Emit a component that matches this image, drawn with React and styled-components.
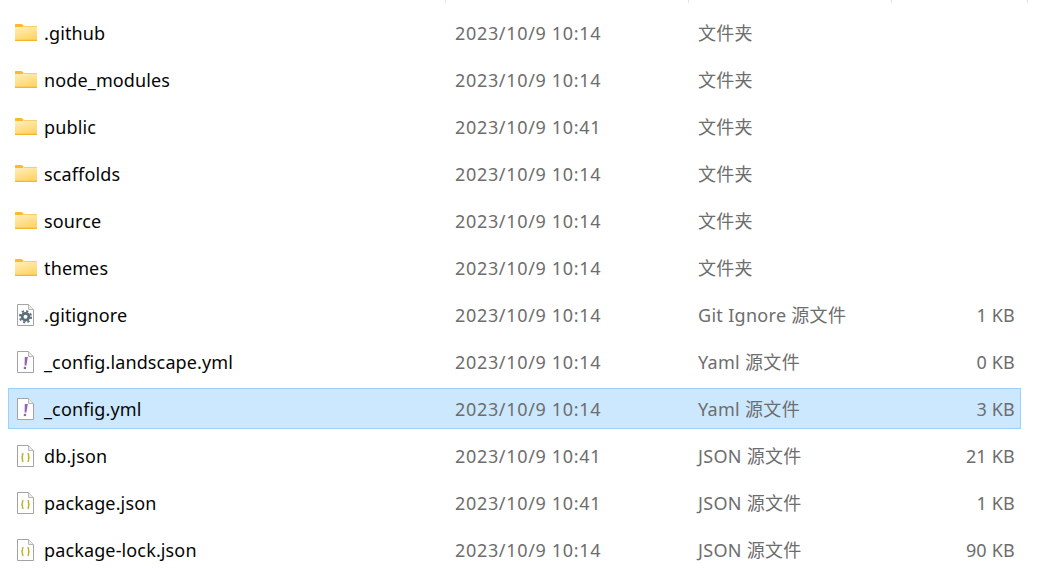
import styled, { createGlobalStyle } from "styled-components";

const FILES = [
  { name: ".github", date: "2023/10/9 10:14", type: "文件夹", icon: "folder" },
  { name: "node_modules", date: "2023/10/9 10:14", type: "文件夹", icon: "folder" },
  { name: "public", date: "2023/10/9 10:41", type: "文件夹", icon: "folder" },
  { name: "scaffolds", date: "2023/10/9 10:14", type: "文件夹", icon: "folder" },
  { name: "source", date: "2023/10/9 10:14", type: "文件夹", icon: "folder" },
  { name: "themes", date: "2023/10/9 10:14", type: "文件夹", icon: "folder" },
  { name: ".gitignore", date: "2023/10/9 10:14", type: "Git Ignore 源文件", size: "1 KB", icon: "gear" },
  { name: "_config.landscape.yml", date: "2023/10/9 10:14", type: "Yaml 源文件", size: "0 KB", icon: "yaml" },
  { name: "_config.yml", date: "2023/10/9 10:14", type: "Yaml 源文件", size: "3 KB", icon: "yaml", selected: true },
  { name: "db.json", date: "2023/10/9 10:41", type: "JSON 源文件", size: "21 KB", icon: "json" },
  { name: "package.json", date: "2023/10/9 10:41", type: "JSON 源文件", size: "1 KB", icon: "json" },
  { name: "package-lock.json", date: "2023/10/9 10:14", type: "JSON 源文件", size: "90 KB", icon: "json" },
];

function FolderIcon() {
  return (
    <svg width="24" height="24" viewBox="0 0 24 24">
      <defs>
        <linearGradient id="folderFill" x1="0" y1="0" x2="0.4" y2="1">
          <stop offset="0" stopColor="#ffefc0" />
          <stop offset="1" stopColor="#ffd569" />
        </linearGradient>
      </defs>
      <path d="M0 3.700C0 3.300 0.300 3 0.700 3H6.500L8.500 4.500V8H0Z" fill="#fdb92c" />
      <path d="M0 6H7.500L9.500 5H22V20H0Z" fill="url(#folderFill)" />
      <path d="M0 18.800H22V19.600C22 19.800 21.800 20 21.600 20H0.400C0.200 20 0 19.800 0 19.600Z" fill="#f7b32b" />
      <path d="M9.500 5H22V5.800H8Z" fill="#fbc552" />
    </svg>
  );
}

function PageIcon({ children }) {
  return (
    <svg width="24" height="24" viewBox="0 0 24 24">
      <path d="M2.500 1.500H13.500L18.500 6.500V22.500H2.500Z" fill="#fff" stroke="#a3a3a3" />
      <path d="M13.500 1.500V6.500H18.500" fill="#ececec" stroke="#b8b8b8" />
      {children}
    </svg>
  );
}

function FileIcon({ kind }) {
  if (kind === "folder") return <FolderIcon />;
  if (kind === "gear") {
    return (
      <PageIcon>
        <circle cx="10.500" cy="13.700" r="3.400" fill="none" stroke="#5a6f7b" strokeWidth="2.800" />
        <circle cx="10.500" cy="13.700" r="5.600" fill="none" stroke="#5a6f7b" strokeWidth="2" strokeDasharray="2.200 2.200" />
      </PageIcon>
    );
  }
  if (kind === "yaml") {
    return (
      <PageIcon>
        <path d="M9.800 7H12.800L11.400 15.500H9.600Z" fill="#9560b5" />
        <rect x="8.800" y="16.800" width="2.300" height="2.300" fill="#9560b5" />
      </PageIcon>
    );
  }
  return (
    <PageIcon>
      <path
        d="M8.500 9.500C7.300 9.500 7.500 10.500 7.500 11.800C7.500 12.800 7.300 13.300 6.500 13.500C7.300 13.700 7.500 14.200 7.500 15.200C7.500 16.500 7.300 17.500 8.500 17.500M12.500 9.500C13.700 9.500 13.500 10.500 13.500 11.800C13.500 12.800 13.700 13.300 14.500 13.500C13.700 13.700 13.500 14.200 13.500 15.200C13.500 16.500 13.700 17.500 12.500 17.500"
        fill="none"
        stroke="#b8b42a"
        strokeWidth="1.500"
      />
    </PageIcon>
  );
}

export default function App() {
  return (
    <>
      <GlobalStyle />
      <Explorer>
        <HeaderStrip>
          <HeaderCell width={446} />
          <HeaderCell width={243} />
          <HeaderCell width={203} />
          <HeaderCell width={136} />
        </HeaderStrip>
        <FileList>
          {FILES.map((file) => (
            <FileRow key={file.name} selected={file.selected}>
              <NameCell>
                <IconSlot>
                  <FileIcon kind={file.icon} />
                </IconSlot>
                <FileName>{file.name}</FileName>
              </NameCell>
              <DateCell>{file.date}</DateCell>
              <TypeCell>{file.type}</TypeCell>
              <SizeCell>{file.size}</SizeCell>
            </FileRow>
          ))}
        </FileList>
      </Explorer>
    </>
  );
}

const GlobalStyle = createGlobalStyle`
  html, body {
    margin: 0;
    padding: 0;
    background: #ffffff;
  }

  body {
    font-family: "Noto Sans", "Noto Sans CJK SC", sans-serif;
  }
`;

const Explorer = styled.div`
  width: 1045px;
  height: 577px;
  overflow: hidden;
  background: #ffffff;
`;

const HeaderStrip = styled.div`
  display: flex;
  height: 3px;
`;

const HeaderCell = styled.div.withConfig({ shouldForwardProp: (prop) => prop !== "width" })`
  width: ${({ width }) => width}px;
  box-sizing: border-box;
  border-right: 1px solid #e5e5e5;
`;

const FileList = styled.div`
  display: flex;
  flex-direction: column;
  gap: 6px;
  padding: 9px 0 0 8px;
`;

const FileRow = styled.div.withConfig({ shouldForwardProp: (prop) => prop !== "selected" })`
  display: flex;
  align-items: center;
  box-sizing: border-box;
  width: 1013px;
  height: 41px;
  flex-shrink: 0;
  font-size: 18px;
  border: 1px solid ${({ selected }) => (selected ? "#99d1ff" : "transparent")};
  background: ${({ selected }) => (selected ? "#cce8ff" : "transparent")};
`;

const NameCell = styled.div`
  display: flex;
  align-items: center;
  width: 446px;
  flex-shrink: 0;
  padding-left: 6px;
  box-sizing: border-box;
`;

const IconSlot = styled.span`
  display: flex;
  width: 24px;
  height: 24px;
  margin-right: 5px;
`;

const FileName = styled.span`
  color: #050505;
  letter-spacing: 0.13px;
`;

const DateCell = styled.div`
  width: 243px;
  flex-shrink: 0;
  color: #6d6d6d;
  letter-spacing: 0.67px;
`;

const TypeCell = styled.div`
  width: 200px;
  flex-shrink: 0;
  padding-bottom: 1px;
  color: #6d6d6d;
  letter-spacing: 0.3px;
`;

const SizeCell = styled.div`
  width: 117px;
  flex-shrink: 0;
  text-align: right;
  color: #6d6d6d;
  letter-spacing: 0.2px;
`;
